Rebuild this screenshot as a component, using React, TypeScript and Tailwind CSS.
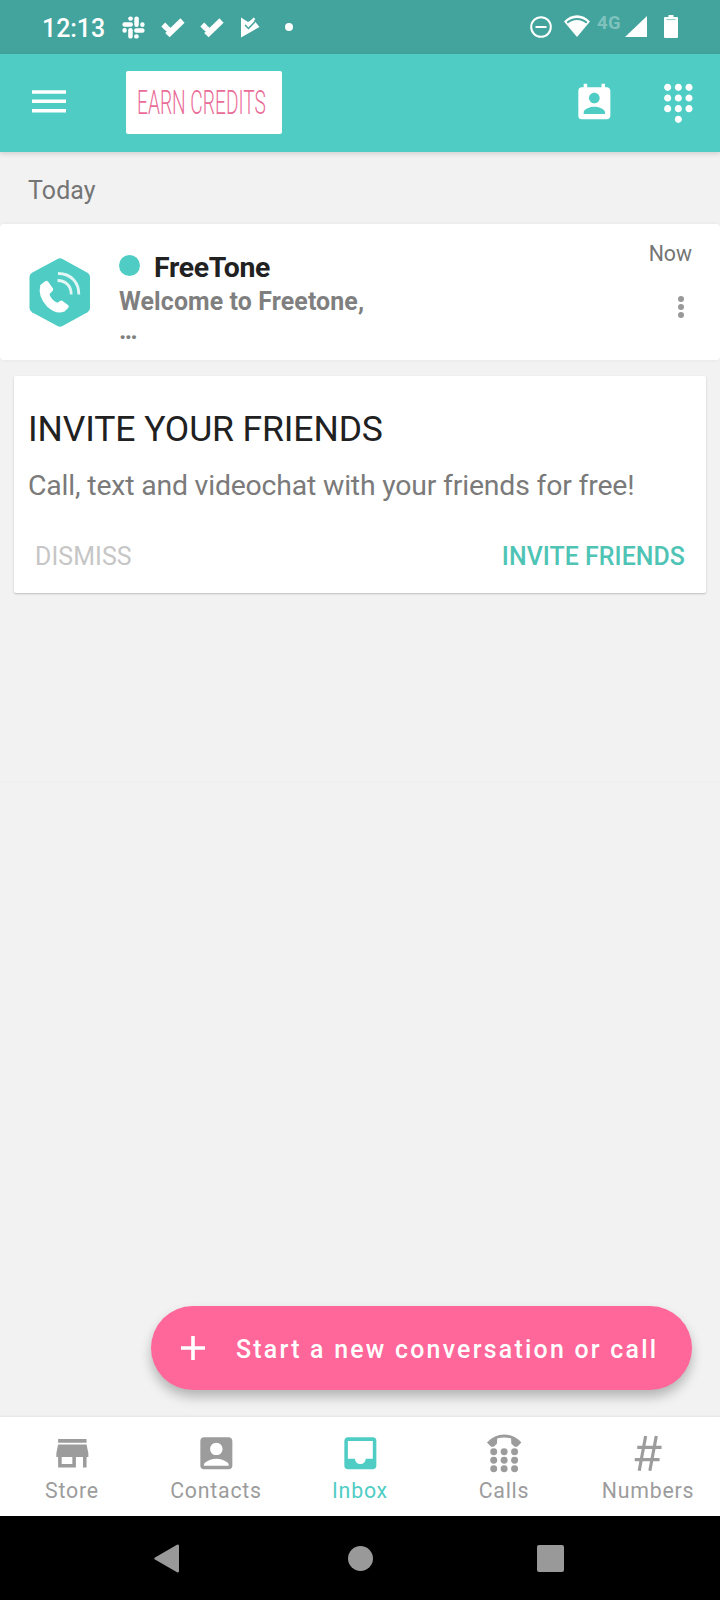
import React from "react";
import { MdAccountBox, MdDialpad, MdInbox, MdPermContactCalendar, MdStore } from "react-icons/md";

function SlackMark({ className }: { className: string }) {
  return (
    <svg className={className} width="23" height="23" viewBox="0 0 23 23" fill="#fff">
      {[0, 90, 180, 270].map((angle) => (
        <g key={angle} transform={`rotate(${angle} 11.5 11.5)`}>
          <rect x="6.2" y="0.4" width="4.700" height="4.400" rx="2.200" />
          <rect x="0.4" y="6.2" width="10.500" height="4.500" rx="2.200" />
        </g>
      ))}
    </svg>
  );
}

function CheckMark({ className }: { className: string }) {
  return (
    <svg className={className} width="24" height="20" viewBox="0 0 24 20" fill="#fff">
      <path d="M19.400 0.300 L23.600 4.700 L8.600 19.300 L4.200 14.900 Z" />
      <path d="M4.200 4.600 L7.900 8.300 L4 12.200 L0.300 8.500 Z" />
      <path d="M7.900 8.300 L11.300 11.600 L8.600 15.800 L3.800 12 Z" />
    </svg>
  );
}

function StatusBar() {
  return (
    <header className="flex h-[54px] shrink-0 items-start bg-[#42a49d] text-white">
      <span className="ml-[42px] mt-[15px] w-[80px] text-[24.900px] font-medium leading-[28px]">12:13</span>
      <SlackMark className="mt-[16px]" />
      <CheckMark className="ml-[16px] mt-[18px]" />
      <CheckMark className="ml-[15px] mt-[18px]" />
      <svg className="ml-[16px] mt-[17px]" width="20" height="21" viewBox="0 0 20 21">
        <path d="M1 0.5 L8 5 L13 2 L19.500 10 L1 20.5 Z" fill="#fff" />
        <path d="M5 8 L8.500 11.500 L17 2.500" fill="none" stroke="#42a49d" strokeWidth="1.500" />
        <path d="M10.500 5.500 L14.500 1.200" fill="none" stroke="#fff" strokeWidth="2.400" />
      </svg>
      <span className="ml-[25px] mt-[23px] h-[8px] w-[8px] rounded-full bg-white" />
      <svg className="ml-auto mt-[16px]" width="22" height="22" viewBox="0 0 22 22" fill="none" stroke="#fff" strokeWidth="2">
        <circle cx="11" cy="11" r="9.800" />
        <path d="M5.500 11 H16.500" />
      </svg>
      <svg className="ml-[12px] mt-[15px]" width="26" height="22" viewBox="0 0 26 22">
        <path d="M13 22 L0 6.500 C7.500 -1.800 18.500 -1.800 26 6.500 Z" fill="#fff" />
        <path d="M3.200 7.800 C9 2.800 17 2.800 22.800 7.800" fill="none" stroke="#42a49d" strokeWidth="2" />
      </svg>
      <span className="ml-[7px] mt-[13px] w-[26px] text-[18.500px] font-bold leading-[21px] tracking-[0.300px] text-[#7fc2bd]">
        4G
      </span>
      <svg className="ml-[2px] mt-[16px]" width="22" height="21" viewBox="0 0 22 21">
        <path d="M22 0 V21 H0 Z" fill="#fff" />
      </svg>
      <svg className="ml-[17px] mr-[42px] mt-[15px]" width="14" height="23" viewBox="0 0 14 23">
        <path d="M4.500 0 H9.500 V2 H13 Q14 2 14 3 V22 Q14 23 13 23 H1 Q0 23 0 22 V3 Q0 2 1 2 H4.500 Z" fill="#fff" />
        <path d="M2.500 4.600 H11.500" stroke="#8fc9c5" strokeWidth="1" />
      </svg>
    </header>
  );
}

function AppBar() {
  return (
    <div className="z-10 flex h-[98px] shrink-0 items-start bg-[#4fcdc4] text-white shadow-[0_2px_5px_rgba(0,0,0,0.14)]">
      <svg className="ml-[32px] mt-[36px]" width="34" height="23" viewBox="0 0 34 23" fill="none" stroke="#fff" strokeWidth="3.500">
        <path d="M0 1.900 H34 M0 11.300 H34 M0 20.700 H34" />
      </svg>
      <button className="ml-[60px] mt-[17px] flex h-[63px] w-[156px] items-center rounded-[2px] bg-white pl-[11px]">
        <span className="mt-[1px] inline-block origin-left scale-x-[0.590] whitespace-nowrap text-[32.500px] font-light leading-[38px] text-[#ea6c98]">
          EARN CREDITS
        </span>
      </button>
      <MdPermContactCalendar className="ml-auto mt-[28px] h-[42.700px] w-[42.700px]" />
      <MdDialpad className="ml-[41px] mr-[20.500px] mt-[27.500px] h-[42.700px] w-[42.700px]" />
    </div>
  );
}

function FreeToneLogo() {
  return (
    <svg className="ml-[29px] mt-[34px] shrink-0" width="62" height="69" viewBox="0 0 62 69">
      <path
        d="M28.500 1 Q31 -0.300 33.500 1 L58.500 14.800 Q61 16.300 61 19 V50 Q61 52.700 58.500 54.200 L33.500 68 Q31 69.300 28.500 68 L3 54.200 Q0.500 52.700 0.500 50 V19 Q0.500 16.300 3 14.800 Z"
        fill="#4fcdc4"
      />
      <path
        d="M11.300 27 L16.500 23 Q18 22.200 19 23.600 L24 30.500 Q24.600 32 23.500 33 L20.500 36 Q22 42 28.500 44.800 L31 43 Q32.300 42.200 33.600 43 L39.300 47.300 Q40.300 48.500 39.300 49.800 L35.500 53.500 Q27 57 18 48.500 Q8.500 38.500 11.300 27 Z"
        fill="#fff"
      />
      <g fill="none" stroke="#e2f7f5" strokeWidth="2.800">
        <path d="M29 15.500 C42 15.500 50 24.500 49.800 36.500" />
        <path d="M28.500 22.500 C37 22.500 42.500 28.500 42.200 36.500" />
      </g>
    </svg>
  );
}

function Conversation() {
  return (
    <article className="flex h-[136px] items-start rounded-[4px] bg-white shadow-[0_0_4px_rgba(0,0,0,0.06)]">
      <FreeToneLogo />
      <div className="ml-[28px] mt-[27px] w-[300px]">
        <div className="flex items-center">
          <span className="mb-[5px] h-[21px] w-[21px] rounded-full bg-[#4fcdc4]" />
          <h2 className="ml-[14px] text-[28.400px] font-bold leading-[34px] tracking-[-0.300px] text-[#212121]">FreeTone</h2>
        </div>
        <p className="mt-[2px] text-[24.900px] font-bold leading-[29px] tracking-[0.120px] text-[#7f7f7f]">
          Welcome to Freetone,
          <br />…
        </p>
      </div>
      <div className="ml-auto mr-[28px] mt-[17px] flex flex-col items-end">
        <time className="text-[21.300px] leading-[26px] text-[#757575]">Now</time>
        <button className="mr-[8px] mt-[29px] flex flex-col gap-[2px]" aria-label="More">
          <span className="h-[6px] w-[6px] rounded-full bg-[#999]" />
          <span className="h-[6px] w-[6px] rounded-full bg-[#999]" />
          <span className="h-[6px] w-[6px] rounded-full bg-[#999]" />
        </button>
      </div>
    </article>
  );
}

function InviteCard() {
  return (
    <section className="mx-[14px] mt-[16px] flex h-[217px] flex-col rounded-[2px] bg-white pl-[14px] shadow-[0_1px_2px_rgba(0,0,0,0.22)]">
      <h3 className="mt-[32px] text-[35.500px] leading-[42px] tracking-[-0.110px] text-[#212121]">INVITE YOUR FRIENDS</h3>
      <p className="mt-[19px] text-[28.400px] leading-[34px] tracking-[-0.180px] text-[#7a7a7a]">
        Call, text and videochat with your friends for free!
      </p>
      <div className="mt-[39px] flex justify-between pl-[7px] pr-[21px] text-[24.900px] leading-[30px]">
        <button className="tracking-[0.100px] text-[#c6c6c6]">DISMISS</button>
        <button className="font-medium tracking-[0.060px] text-[#4fc4b5]">INVITE FRIENDS</button>
      </div>
    </section>
  );
}

function CallsIcon({ className }: { className: string }) {
  const cols = [10.800, 21.300, 31.800];
  const rows = [19.800, 28.400, 37];
  return (
    <svg className={className} viewBox="0 0 43 43" fill="currentColor">
      <path d="M4 10.500 Q11.500 2.500 21.300 2.500 Q31.100 2.500 38.700 10.500 L35 14.300 Q33 15.700 31 14 L28.500 11.500 L28.300 6.500 Q21.300 4.500 14.300 6.500 L14.100 11.500 L11.700 14 Q9.700 15.700 7.700 14.300 Z" />
      {rows.map((y) => cols.map((x) => <circle key={`${x}-${y}`} cx={x} cy={y} r="3.500" />))}
    </svg>
  );
}

function HashIcon({ className }: { className: string }) {
  return (
    <svg className={className} viewBox="0 0 43 43" fill="none" stroke="currentColor" strokeWidth="3.200">
      <path d="M18.800 4 L12.300 39 M29.500 4 L23 39 M10.300 15.400 H34.800 M7.800 27.800 H32.800" />
    </svg>
  );
}

const tabs = [
  { label: "Store", Icon: MdStore, active: false },
  { label: "Contacts", Icon: MdAccountBox, active: false },
  { label: "Inbox", Icon: MdInbox, active: true },
  { label: "Calls", Icon: CallsIcon, active: false },
  { label: "Numbers", Icon: HashIcon, active: false },
];

function BottomTabs() {
  return (
    <nav className="grid h-[99px] shrink-0 grid-cols-5 bg-white shadow-[0_-1px_2px_rgba(0,0,0,0.06)]">
      {tabs.map(({ label, Icon, active }) => (
        <button
          key={label}
          className={`flex flex-col items-center pt-[14.700px] ${active ? "text-[#4fcdc4]" : "text-[#9c9c9c]"}`}
        >
          <Icon className="h-[42.700px] w-[42.700px]" />
          <span className="mt-[3.900px] text-[21.300px] leading-[26px] tracking-[0.780px]">{label}</span>
        </button>
      ))}
    </nav>
  );
}

function SystemNav() {
  return (
    <footer className="flex h-[84px] shrink-0 items-start bg-black text-[#999]">
      <svg className="ml-[154px] mt-[28px]" width="26" height="29" viewBox="0 0 26 29">
        <path d="M1 13.400 L23 0.700 Q25 0 25 2 V27 Q25 29 23 28.300 L1 15.600 Q-0.500 14.500 1 13.400 Z" fill="currentColor" />
      </svg>
      <span className="ml-[168px] mt-[30px] h-[25px] w-[25px] rounded-full bg-[#999]" />
      <span className="ml-[164px] mt-[29px] h-[27px] w-[27px] rounded-[2px] bg-[#999]" />
    </footer>
  );
}

export default function App() {
  return (
    <div className="flex h-[1600px] w-[720px] flex-col overflow-hidden bg-[#f2f2f2] font-['Roboto',sans-serif]">
      <StatusBar />
      <AppBar />
      <main className="flex min-h-0 flex-1 flex-col">
        <h1 className="h-[72px] pl-[28px] pt-[24px] text-[24.900px] leading-[30px] tracking-[0.150px] text-[#757575]">Today</h1>
        <Conversation />
        <InviteCard />
        <div className="mt-[188px] h-px bg-[#efefef]" />
        <button className="mb-[27px] ml-[151px] mr-[28px] mt-auto flex h-[84px] items-center rounded-full bg-[#ff6699] text-white shadow-[0_7px_12px_rgba(0,0,0,0.25)]">
          <svg className="ml-[29px]" width="26" height="26" viewBox="0 0 26 26" stroke="#fff" strokeWidth="3.600">
            <path d="M13 1 V25 M1 13 H25" />
          </svg>
          <span className="ml-[30px] mt-[3px] whitespace-nowrap text-[24.900px] font-medium leading-[30px] tracking-[2.240px]">
            Start a new conversation or call
          </span>
        </button>
      </main>
      <BottomTabs />
      <SystemNav />
    </div>
  );
}
